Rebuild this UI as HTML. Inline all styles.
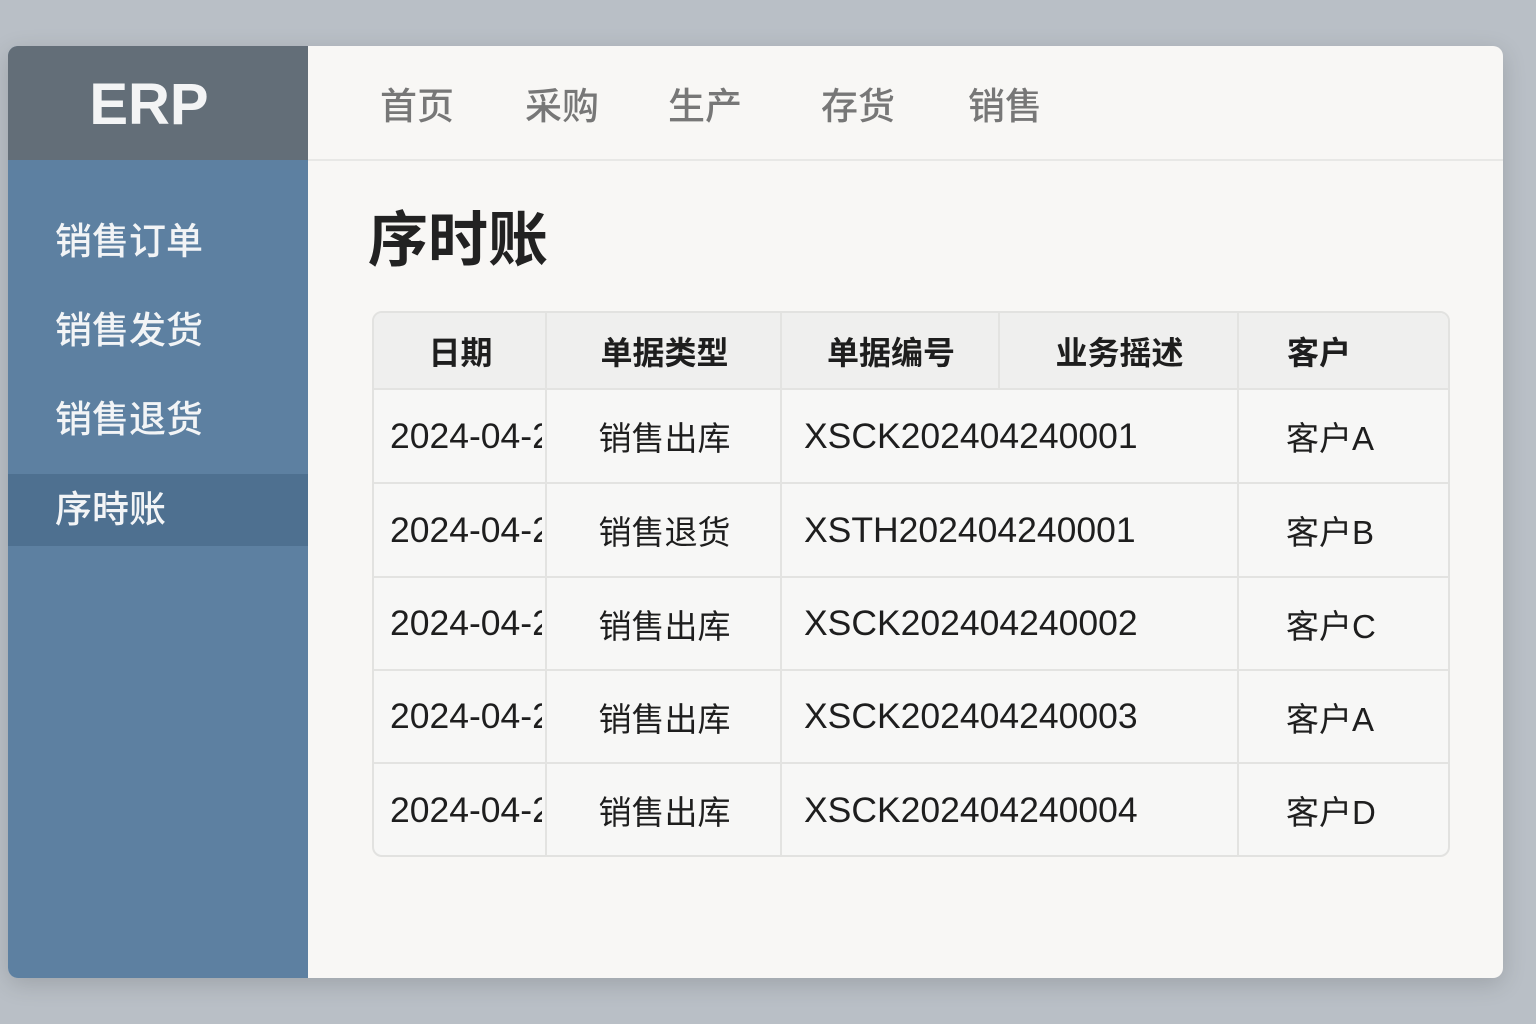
<!DOCTYPE html>
<html><head><meta charset="utf-8"><style>
*{margin:0;padding:0;box-sizing:border-box}
body{width:1536px;height:1024px;background:#b9bfc6;font-family:"Liberation Sans","Noto Sans CJK SC",sans-serif;position:relative;overflow:hidden}
.card{position:absolute;left:8px;top:46px;width:1495px;height:932px;background:#f8f7f5;border-radius:10px;overflow:hidden;box-shadow:0 6px 24px rgba(0,0,0,.15)}
.side{position:absolute;left:0;top:0;width:300px;height:932px;background:#5d80a1}
.logo{position:absolute;left:0;top:0;width:300px;height:114px;background:#636e78;color:#f3f4f5;font-weight:bold;font-size:58px;text-align:center;line-height:118px;letter-spacing:0px;padding-right:18px}
.si{position:absolute;left:47px;color:#f2f4f6;font-size:37px;font-weight:500}
.act{position:absolute;left:0;top:428px;width:300px;height:72px;background:#4e7090}
.nav{position:absolute;color:#777;font-size:37px;font-weight:500}
.hline{position:absolute;left:300px;top:113px;width:1195px;height:2px;background:#e8e8e6}
h1{position:absolute;left:368px;top:192px;font-size:60px;font-weight:bold;color:#222}
.t{position:absolute;left:372px;top:311px;width:1078px;height:546px;border:2px solid #e2e2e0;border-radius:10px;overflow:hidden;background:#f7f7f6}
.c{position:absolute;display:flex;align-items:center;justify-content:center;color:#1e1e1e;font-size:33px}
.n{font-size:35.5px}
.h{font-weight:bold;background:#efefee;font-size:32px}
.vl{position:absolute;width:2px;background:#e3e3e1}
.hl{position:absolute;left:0;width:1078px;height:2px;background:#e3e3e1}
</style></head><body>
<div class="card">
<div class="side">
<div class="logo">ERP</div>
<div class="act"></div>
<div class="si" style="top:165px">销售订单</div>
<div class="si" style="top:254px">销售发货</div>
<div class="si" style="top:343px">销售退货</div>
<div class="si" style="top:433px">序時账</div>
</div>
<div class="nav" style="left:372px;top:30px">首页</div>
<div class="nav" style="left:517px;top:30px">采购</div>
<div class="nav" style="left:660px;top:30px">生产</div>
<div class="nav" style="left:813px;top:30px">存货</div>
<div class="nav" style="left:960px;top:30px">销售</div>
<div class="hline"></div>
</div>
<h1>序时账</h1>
<div class="t">
<div class="c h" style="left:0;top:0;width:1078px;height:76px"></div>
<div class="c h" style="left:0;top:0;width:173px;height:76px">日期</div>
<div class="c h" style="left:173px;top:0;width:235px;height:76px">单据类型</div>
<div class="c h" style="left:408px;top:0;width:218px;height:76px">单据编号</div>
<div class="c h" style="left:626px;top:0;width:239px;height:76px">业务摇述</div>
<div class="c h" style="left:865px;top:0;width:160px;height:76px">客户</div>
<div class="vl" style="left:171px;top:0;height:546px"></div>
<div class="vl" style="left:406px;top:0;height:546px"></div>
<div class="vl" style="left:624px;top:0;height:76px"></div>
<div class="vl" style="left:863px;top:0;height:546px"></div>
<div class="hl" style="top:75px"></div>
<div class="hl" style="top:169px"></div>
<div class="hl" style="top:263px"></div>
<div class="hl" style="top:356px"></div>
<div class="hl" style="top:449px"></div>
<div class="c n" style="left:16px;top:77px;width:152px;height:92px;justify-content:flex-start;overflow:hidden;white-space:nowrap">2024-04-24</div>
<div class="c" style="left:173px;top:77px;width:235px;height:92px">销售出库</div>
<div class="c n" style="left:430px;top:77px;width:430px;height:92px;justify-content:flex-start">XSCK202404240001</div>
<div class="c" style="left:912px;top:77px;width:160px;height:92px;justify-content:flex-start">客户A</div>
<div class="c n" style="left:16px;top:171px;width:152px;height:92px;justify-content:flex-start;overflow:hidden;white-space:nowrap">2024-04-24</div>
<div class="c" style="left:173px;top:171px;width:235px;height:92px">销售退货</div>
<div class="c n" style="left:430px;top:171px;width:430px;height:92px;justify-content:flex-start">XSTH202404240001</div>
<div class="c" style="left:912px;top:171px;width:160px;height:92px;justify-content:flex-start">客户B</div>
<div class="c n" style="left:16px;top:265px;width:152px;height:91px;justify-content:flex-start;overflow:hidden;white-space:nowrap">2024-04-24</div>
<div class="c" style="left:173px;top:265px;width:235px;height:91px">销售出库</div>
<div class="c n" style="left:430px;top:265px;width:430px;height:91px;justify-content:flex-start">XSCK202404240002</div>
<div class="c" style="left:912px;top:265px;width:160px;height:91px;justify-content:flex-start">客户C</div>
<div class="c n" style="left:16px;top:358px;width:152px;height:91px;justify-content:flex-start;overflow:hidden;white-space:nowrap">2024-04-24</div>
<div class="c" style="left:173px;top:358px;width:235px;height:91px">销售出库</div>
<div class="c n" style="left:430px;top:358px;width:430px;height:91px;justify-content:flex-start">XSCK202404240003</div>
<div class="c" style="left:912px;top:358px;width:160px;height:91px;justify-content:flex-start">客户A</div>
<div class="c n" style="left:16px;top:451px;width:152px;height:92px;justify-content:flex-start;overflow:hidden;white-space:nowrap">2024-04-24</div>
<div class="c" style="left:173px;top:451px;width:235px;height:92px">销售出库</div>
<div class="c n" style="left:430px;top:451px;width:430px;height:92px;justify-content:flex-start">XSCK202404240004</div>
<div class="c" style="left:912px;top:451px;width:160px;height:92px;justify-content:flex-start">客户D</div>
</div>
</body></html>
